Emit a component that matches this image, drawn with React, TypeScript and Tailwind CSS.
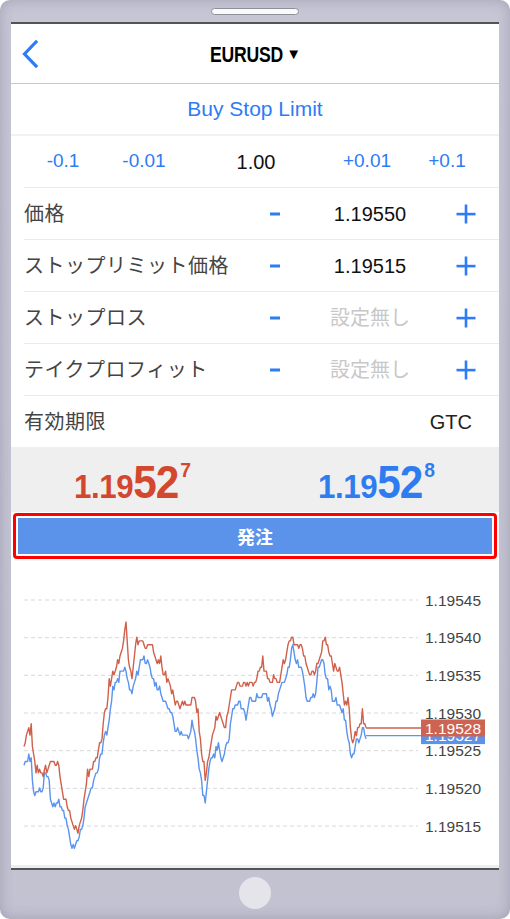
import React from 'react';

const BLUE_PTS: [number, number][] = [
  [24, 774], [27, 758], [31, 758], [34, 795], [38, 792], [42, 790], [46, 774], [49, 778], [51, 805], [58, 803],
  [64, 810], [70, 840], [75, 850], [79, 835], [85, 810], [90, 790], [95, 778], [100, 760], [105, 737], [110, 720],
  [113, 690], [120, 675], [125, 667], [129, 690], [134, 690], [140, 660], [148, 660], [152, 680], [160, 690], [170, 715],
  [176, 730], [185, 735], [190, 732], [192, 720], [196, 740], [200, 775], [205, 803], [210, 762], [215, 755], [218, 743],
  [222, 758], [228, 745], [232, 710], [238, 705], [243, 705], [246, 715], [250, 698], [265, 698], [270, 700], [273, 715],
  [280, 690], [287, 672], [290, 660], [293, 645], [297, 665], [302, 665], [306, 700], [311, 700], [315, 695], [318, 680],
  [322, 658], [327, 680], [333, 700], [340, 705], [345, 720], [350, 747], [353, 758], [357, 732], [360, 742], [363, 728],
  [366, 735],
];

const RED_PTS: [number, number][] = [
  [24, 752], [28, 727], [32, 740], [36, 772], [44, 772], [50, 762], [58, 765], [62, 790], [70, 812], [75, 835],
  [80, 825], [85, 792], [90, 770], [95, 760], [100, 745], [105, 712], [112, 680], [118, 662], [122, 650], [126, 623],
  [128, 660], [132, 677], [137, 637], [145, 645], [152, 645], [156, 660], [163, 668], [168, 683], [175, 703], [192, 703],
  [195, 693], [200, 740], [205, 783], [210, 750], [215, 722], [220, 713], [225, 730], [232, 690], [240, 685], [255, 680],
  [262, 667], [270, 680], [280, 680], [285, 660], [290, 638], [298, 645], [302, 647], [306, 668], [310, 677], [315, 670],
  [320, 660], [325, 638], [330, 655], [333, 668], [340, 670], [345, 707], [348, 695], [352, 743], [355, 745], [358, 728],
  [362, 720], [366, 728],
];

function rand(seed: number) {
  let s = seed;
  return () => {
    s = (s * 16807) % 2147483647;
    return s / 2147483647;
  };
}

function lerp(pts: [number, number][], x: number) {
  for (let i = 1; i < pts.length; i++) {
    if (x <= pts[i][0]) {
      const [x0, y0] = pts[i - 1];
      const [x1, y1] = pts[i];
      return y0 + ((y1 - y0) * (x - x0)) / (x1 - x0);
    }
  }
  return pts[pts.length - 1][1];
}

// chart coords: x relative to screen (page x - 11), y relative to chart top (page y - 560)
function buildSeries() {
  const r = rand(23);
  const q = (v: number) => Math.round(v / 3.77) * 3.77;
  const blue: string[] = [];
  const red: string[] = [];
  let n = 0;
  for (let x = 24; x <= 366; x += 1.2) {
    n = n * 0.2 + (r() - 0.5) * 9;
    const spikeB = r() < 0.07 ? (r() - 0.5) * 22 : 0;
    const spikeR = r() < 0.08 ? -r() * 14 : 0;
    const b = q(lerp(BLUE_PTS, x) + n + spikeB);
    const rd = Math.min(q(lerp(RED_PTS, x) + n * 0.7 + (r() - 0.5) * 6 + spikeR), b - 3);
    blue.push(`${(x - 11).toFixed(1)},${(b - 560).toFixed(1)}`);
    red.push(`${(x - 11).toFixed(1)},${(rd - 560).toFixed(1)}`);
  }
  return { blue: blue.join(' '), red: red.join(' ') };
}

const SERIES = buildSeries();
const LEVELS = ['1.19545', '1.19540', '1.19535', '1.19530', '1.19525', '1.19520', '1.19515'];

function Minus() {
  return (
    <svg width="12" height="4" viewBox="0 0 12 4">
      <rect x="1" y="0.5" width="10" height="3" fill="#2d7cf6" />
    </svg>
  );
}

function Plus() {
  return (
    <svg width="20" height="20" viewBox="0 0 20 20">
      <rect x="0.5" y="8.8" width="19" height="2.6" fill="#2d7cf6" />
      <rect x="8.7" y="0.5" width="2.6" height="19" fill="#2d7cf6" />
    </svg>
  );
}

function FieldRow({ label, value, empty }: { label: string; value: string; empty?: boolean }) {
  return (
    <div className="ml-[13px] border-t border-[#ebebeb] h-[52px] flex items-center">
      <div className="flex-1 text-[20px] text-[#444] tracking-[0.5px]">{label}</div>
      <div className="w-[40px] flex justify-center">
        <Minus />
      </div>
      <div className={`w-[150px] text-center text-[20px] ${empty ? 'text-[#c8c8c8]' : 'text-[#111]'}`}>{value}</div>
      <div className="w-[42px] flex justify-center">
        <Plus />
      </div>
      <div className="w-[12px]" />
    </div>
  );
}

function Quote({ head, big, tail, color }: { head: string; big: string; tail: string; color: string }) {
  return (
    <div className={`flex-1 flex justify-center ${color}`}>
      <div className="flex items-baseline font-bold leading-none scale-x-[0.92]">
        <span className="text-[34px] tracking-[-0.5px]">{head}</span>
        <span className="text-[46px] tracking-[-1px]">{big}</span>
        <span className="text-[21px] self-start ml-[2px]">{tail}</span>
      </div>
    </div>
  );
}

function Chart() {
  const y = (i: number) => 40 + i * 37.67;
  const redY = 168;
  const blueY = 175.6;
  return (
    <svg width="488" height="305" viewBox="0 0 488 305" className="block">
      {LEVELS.map((l, i) => (
        <g key={l}>
          <line x1="13" x2="407" y1={y(i)} y2={y(i)} stroke="#d9d9d9" strokeWidth="1" strokeDasharray="4 3" />
          <text x="414" y={y(i) + 5.5} fontSize="15.5" fill="#444" fontFamily="Liberation Sans, sans-serif">
            {l}
          </text>
        </g>
      ))}
      <polyline points={SERIES.blue} fill="none" stroke="#5b94ee" strokeWidth="1.4" strokeLinejoin="round" />
      <polyline points={SERIES.red} fill="none" stroke="#d0604c" strokeWidth="1.4" strokeLinejoin="round" />
      <line x1="355" x2="410" y1={blueY} y2={blueY} stroke="#5b94ee" strokeWidth="1.4" />
      <line x1="355" x2="410" y1={redY} y2={redY} stroke="#d0604c" strokeWidth="1.4" />
      <rect x="410" y={blueY - 8.5} width="64" height="17" fill="#5b92ea" />
      <text x="414" y={blueY + 5.5} fontSize="15.5" fill="#fff" fontFamily="Liberation Sans, sans-serif">
        1.19527
      </text>
      <rect x="410" y={redY - 8.5} width="64" height="17" fill="#cd6352" />
      <text x="414" y={redY + 5.5} fontSize="15.5" fill="#fff" fontFamily="Liberation Sans, sans-serif">
        1.19528
      </text>
    </svg>
  );
}

export default function App() {
  return (
    <div className="w-[510px] h-[919px] bg-white font-['Liberation_Sans','Noto_Sans_CJK_JP',sans-serif]">
      <div className="w-[510px] h-[919px] rounded-[10px] bg-gradient-to-b from-[#c7c6d5] to-[#c3c2d1] shadow-[inset_0_0_14px_rgba(60,60,90,0.25)] flex flex-col items-center">
        {/* speaker */}
        <div className="h-[22px] flex items-start pt-[8px]">
          <div className="w-[88px] h-[7px] rounded-full bg-[#fafafa] border border-[#8f8f99]" />
        </div>

        {/* screen */}
        <div className="w-[488px] bg-white border-t-2 border-b-2 border-[#545454] flex flex-col">
          {/* nav bar */}
          <div className="h-[60px] border-b border-[#c9c9c9] flex items-center">
            <svg width="18" height="28" viewBox="0 0 18 28" className="ml-[10px]">
              <path d="M15 2 L3.5 14 L15 26" fill="none" stroke="#2d7cf6" strokeWidth="3.2" strokeLinecap="square" />
            </svg>
            <div className="flex-1 flex justify-center items-center pr-[36px] pt-[2px] text-black">
              <span className="inline-block font-bold text-[22px] scale-x-[0.8] tracking-[-0.3px]">EURUSD</span>
              <span className="text-[15px] -ml-[6px]">▼</span>
            </div>
          </div>

          {/* order type */}
          <div className="h-[52px] border-b-2 border-[#f1f1f1] flex items-center justify-center text-[21px] text-[#2d7cf6]">
            Buy Stop Limit
          </div>

          {/* volume */}
          <div className="h-[51px] flex items-center text-[19px]">
            <div className="w-[104px] text-center text-[#2d7cf6]">-0.1</div>
            <div className="w-[58px] text-center text-[#2d7cf6]">-0.01</div>
            <div className="w-[166px] text-center text-[20px] text-[#111]">1.00</div>
            <div className="w-[56px] text-center text-[#2d7cf6]">+0.01</div>
            <div className="w-[104px] text-center text-[#2d7cf6]">+0.1</div>
          </div>

          <FieldRow label="価格" value="1.19550" />
          <FieldRow label="ストップリミット価格" value="1.19515" />
          <FieldRow label="ストップロス" value="設定無し" empty />
          <FieldRow label="テイクプロフィット" value="設定無し" empty />
          <div className="ml-[13px] border-t border-[#ebebeb] h-[52px] flex items-center justify-between pr-[27px] text-[20px]">
            <span className="text-[#444] tracking-[0.5px]">有効期限</span>
            <span className="text-[#222]">GTC</span>
          </div>

          {/* quotes */}
          <div className="h-[65px] bg-[#efefef] flex pt-[12px]">
            <Quote head="1.19" big="52" tail="7" color="text-[#d3472f]" />
            <Quote head="1.19" big="52" tail="8" color="text-[#2f7cf0]" />
          </div>

          {/* order button */}
          <div className="h-[48px] px-[2px] pt-[1px]">
            <div className="h-[46px] border-[3px] border-[#ff0000] rounded-[4px] p-[2px] bg-white">
              <div className="h-full bg-[#5b93eb] flex items-center justify-center text-white font-bold text-[18px] font-['Noto_Sans_CJK_JP',sans-serif]">
                発注
              </div>
            </div>
          </div>

          <Chart />
          <div className="h-[3px] bg-[#eeeeee]" />
        </div>

        {/* home button */}
        <div className="flex-1 flex items-start pt-[7px]">
          <div className="w-[32px] h-[32px] rounded-full bg-[#e4e4ea]" />
        </div>
      </div>
    </div>
  );
}
